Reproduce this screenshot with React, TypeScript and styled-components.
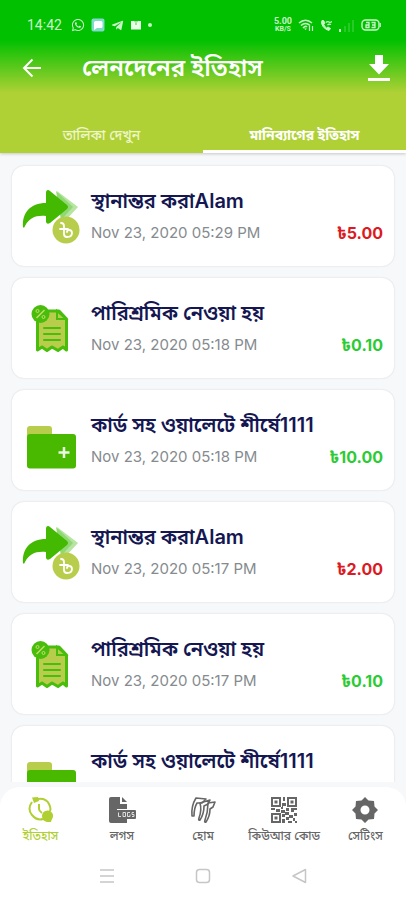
import React from "react";
import styled, { createGlobalStyle } from "styled-components";
import { FaWhatsapp, FaTelegramPlane } from "react-icons/fa";

const Global = createGlobalStyle`
  *, *::before, *::after { box-sizing: border-box; }
  body { margin: 0; background: #f7f8fa; font-family: "Inter", "Noto Sans Bengali", "Noto Sans", sans-serif; }
  button { font: inherit; border: 0; background: none; padding: 0; color: inherit; cursor: pointer; }
  svg { display: block; flex: none; }
`;

const Screen = styled.div`
  display: flex;
  flex-direction: column;
  height: 100vh;
  overflow: hidden;
`;

const Header = styled.header`
  color: #fff;
  background: linear-gradient(#00c000 26%, #b0d136 61%);
  box-shadow: 0 1px 3px rgba(0, 0, 0, 0.2);
`;

const StatusBar = styled.div`
  display: flex;
  align-items: center;
  justify-content: space-between;
  height: 50px;
  padding: 0 25px 0 27px;
  color: #c8f4c8;
`;

const StatusGroup = styled.div<{ $gap: number }>`
  display: flex;
  align-items: center;
  gap: ${(p) => p.$gap}px;
`;

const Clock = styled.time`
  font: 400 14px "Roboto", sans-serif;
  margin-right: 3px;
`;

const NetSpeed = styled.span`
  display: grid;
  justify-items: center;
  font: 700 9px/9px "Roboto", sans-serif;
`;

const NetUnit = styled.span`
  font-size: 7px;
  line-height: 7px;
`;

const TitleBar = styled.div`
  display: flex;
  align-items: center;
  height: 36px;
  padding: 0 15px 0 22px;
`;

const IconButton = styled.button`
  display: flex;
`;

const Title = styled.h1`
  flex: 1;
  margin: 0 0 0 40px;
  font-size: 24px;
  line-height: 36px;
  font-weight: 600;
`;

const Tabs = styled.div`
  display: flex;
  padding-top: 34px;
`;

const Tab = styled.button<{ $active?: boolean }>`
  flex: 1;
  height: 33px;
  && {
    padding-top: 2px;
    font-size: 14px;
    font-weight: ${(p) => (p.$active ? 700 : 500)};
    border-bottom: 3px solid ${(p) => (p.$active ? "#fff" : "transparent")};
    color: ${(p) => (p.$active ? "#fff" : "#eef5c8")};
  }
`;

const List = styled.ul`
  flex: 1;
  min-height: 0;
  margin: 0 0 5px;
  padding: 13px 12px 0;
  list-style: none;
  overflow: hidden;
  display: flex;
  flex-direction: column;
  gap: 12px;
`;

const Card = styled.li`
  flex: none;
  display: flex;
  align-items: center;
  min-height: 100px;
  padding: 2px 11px 0 9px;
  background: #fff;
  border-radius: 12px;
  box-shadow: 0 0 2px rgba(0, 0, 0, 0.16);
`;

const Details = styled.div`
  flex: 1;
  min-width: 0;
  margin-left: 10px;
`;

const Name = styled.h2`
  margin: 0;
  font-size: 20px;
  line-height: 32px;
  font-weight: 600;
  color: #141752;
  white-space: nowrap;
`;

const Meta = styled.div`
  display: flex;
  align-items: center;
  justify-content: space-between;
  min-height: 32px;
  line-height: 32px;
`;

const When = styled.time`
  font-size: 15px;
  color: #858b8f;
`;

const Amount = styled.span<{ $credit: boolean }>`
  font-size: 16px;
  font-weight: 700;
  color: ${(p) => (p.$credit ? "#2ccb35" : "#dd1a1f")};
`;

const Nav = styled.nav`
  display: flex;
  height: 72px;
  padding-top: 9px;
  background: #fff;
  border-radius: 20px 20px 0 0;
`;

const NavItem = styled.button<{ $active?: boolean }>`
  flex: 1 1 0;
  min-width: 0;
  display: flex;
  flex-direction: column;
  align-items: center;
  gap: 3px;
  && { color: ${(p) => (p.$active ? "#b0cf32" : "#666")}; }
`;

const NavLabel = styled.span`
  font-size: 12px;
  line-height: 18px;
  font-weight: 500;
  white-space: nowrap;
`;

const SystemBar = styled.div`
  display: flex;
  justify-content: center;
  gap: 72px;
  height: 41px;
  padding-top: 5px;
  background: #fff;
  color: #c6c6c6;
`;

const SystemButton = styled.button`
  height: 24px;
`;

const ChatIcon = () => (
  <svg width="14" height="14" viewBox="0 0 14 14">
    <rect x="0.500" y="0.500" width="13" height="13" rx="2" fill="#7fdccb" />
    <path d="M3 4.500Q3 3 4.500 3H10Q11.500 3 11.500 4.500V8.500Q11.500 10 10 10H6L3 12z" fill="#fff" />
  </svg>
);

const GiftIcon = () => (
  <svg width="12" height="12" viewBox="0 0 12 12">
    <path d="M1 2H11V10.500H1z" fill="#eaffea" />
    <path d="M4 1.500L6 3.500 8 1.500M6 4V6" fill="none" stroke="#4dcb4d" />
  </svg>
);

const WifiIcon = () => (
  <svg width="16" height="14" viewBox="0 0 16 14" fill="none" stroke="currentColor" strokeWidth="1.600">
    <path d="M1 5Q7.500-.5 14 5M3 7.500Q7.500 3.500 12 7.500M5 10Q7.500 7.500 9 9" />
    <path d="M7.500 12L6 10.500H9z" fill="currentColor" stroke="none" />
    <path d="M11.500 8V13M14.500 8V13" strokeWidth="1.200" />
  </svg>
);

const CallIcon = () => (
  <svg width="12" height="13" viewBox="0 0 12 13" fill="none" stroke="currentColor">
    <path d="M2 1.500Q0.500 4 3 7.500T9 11.500L10.500 9.500 8 8 6.500 9Q4.500 7.500 3.800 5.500L5 4 3.500 1.500z" fill="currentColor" />
    <path d="M6 3.500Q7.500 2 9 3T12 2.500M7.500 6Q9 4.500 11 5.500" strokeWidth="1.300" />
  </svg>
);

const SignalIcon = () => (
  <svg width="17" height="13" viewBox="0 0 17 13" fill="currentColor">
    <rect x="1" y="10" width="2" height="3" />
    <rect x="6" y="7" width="2" height="6" opacity="0.2" />
    <rect x="10" y="4" width="2" height="9" opacity="0.2" />
    <rect x="14" y="1" width="2" height="12" opacity="0.2" />
  </svg>
);

const BatteryIcon = () => (
  <svg width="20" height="12" viewBox="0 0 20 12" fill="none" stroke="currentColor">
    <rect x="1" y="1" width="17" height="10" rx="3.500" strokeWidth="1.400" />
    <path d="M19.300 4V8" strokeWidth="1.200" />
    <path d="M5 3.500H8V8.500H5V6H8M10.500 3.500H14V8.500H10.500M11 6H14" strokeWidth="1.300" />
  </svg>
);

const BackIcon = () => (
  <svg width="20" height="20" viewBox="0 0 20 20" fill="none" stroke="currentColor" strokeWidth="2">
    <path d="M19 10H2.500M10.500 1.500L2 10 10.500 18.500" />
  </svg>
);

const DownloadIcon = () => (
  <svg width="24" height="28" viewBox="0 0 24 28" fill="currentColor">
    <path d="M8 1H16V10H22L12 20.500 2 10H8zM1 24H23V27H1z" />
  </svg>
);

const TransferIcon = () => (
  <svg width="60" height="60" viewBox="0 0 60 60">
    <path d="M36 4L57 20 42 36z" fill="#b5e5a0" />
    <path d="M35 4L52 20 40 33z" fill="#8fd873" />
    <path d="M27 3Q25 3 25 6V16C9 16 1 26 2 40Q3 42 4 39C8 31 15 28 25 29V35Q26 38 29 36L46 22Q48 20 46 18L29 4Q28 3 27 3z" fill="#43b902" />
    <circle cx="45" cy="43" r="13.500" fill="#b9cd4d" />
    <path d="M40 36q3 0 3 3v8q0 3 3 3 5 0 5-4 0-3-3-3-2 0-2 2M39 42h8" fill="none" stroke="#fff" strokeWidth="1.800" strokeLinecap="round" />
  </svg>
);

const ReceiptIcon = () => (
  <svg width="60" height="60" viewBox="0 0 60 60">
    <path d="M16.500 12H38L45.500 20V51L42 48 37 51.500 31 48 26 51.500 21 48 16.500 51z" fill="#b9cd4d" stroke="#49bd0c" strokeWidth="3" strokeLinejoin="round" />
    <path d="M36 12V20H45z" fill="#b9cd4d" stroke="#49bd0c" strokeWidth="2" />
    <path d="M23 29H39M23 35H39M23 41H39" stroke="#49bd0c" strokeWidth="2" strokeLinecap="round" />
    <circle cx="19.500" cy="15" r="9" fill="#49bd0c" />
    <path d="M15.500 19L23.500 11" stroke="#c6dc68" strokeWidth="1.500" />
    <circle cx="16.500" cy="12" r="1.500" fill="none" stroke="#c6dc68" />
    <circle cx="22.500" cy="18" r="1.500" fill="none" stroke="#c6dc68" />
  </svg>
);

const FolderIcon = () => (
  <svg width="60" height="60" viewBox="0 0 60 60">
    <path d="M6 25V18a3 3 0 0 1 3-3H28a3 3 0 0 1 3 3V25z" fill="#b9cd4d" />
    <rect x="6" y="23" width="49" height="34.500" rx="3" fill="#49b900" />
    <path d="M43 36V47M37.500 41.500H48.500" stroke="#e9f8e0" strokeWidth="2.500" />
  </svg>
);

const HistoryIcon = () => (
  <svg width="28" height="28" viewBox="0 0 28 28" fill="none" stroke="currentColor" strokeWidth="2">
    <path d="M5 6Q0 13 5 19T16 23M11 3Q19 2 22 8T22 16" />
    <path d="M12 8V13Q12 15 15 17" />
    <path d="M5 1.500L11 1 12 5 7 7z" fill="currentColor" stroke="none" />
    <circle cx="20.500" cy="20" r="5.500" fill="currentColor" stroke="none" />
    <path d="M14 23L20 26H24L26 18z" fill="currentColor" stroke="none" />
  </svg>
);

const LogsIcon = () => (
  <svg width="28" height="28" viewBox="0 0 28 28">
    <path d="M3 1H12V8H19V13H9V22H19V27H3Q1 27 1 25V3Q1 1 3 1z" fill="currentColor" />
    <path d="M14 1L19 6H14z" fill="currentColor" />
    <rect x="8" y="14" width="20" height="9" rx="1" fill="currentColor" />
    <path d="M10.500 16.500V20.500H13M15 16.500H17.500V20.500H15zM22 16.500H19.500V20.500H22V18.500M26 16.500H24V18.500H26V20.500H24" fill="none" stroke="#ddd" />
  </svg>
);

const HomeIcon = () => (
  <svg width="28" height="28" viewBox="0 0 28 28" fill="none" stroke="currentColor" strokeWidth="1.600" strokeLinejoin="round">
    <path d="M3 20Q2 10 7 2L17 3 13 7H8Q5 12 5 20z" />
    <path d="M11 7L21 4 19 8 15 10Q15 18 11 24Q9 25 10 22Q13 14 11 7z" />
    <path d="M19 7L26 6 24 11 21 13Q21 20 17 26Q15 27 16 24Q19 16 19 7z" />
  </svg>
);

const QrIcon = () => (
  <svg width="28" height="28" viewBox="0 0 28 28">
    <g fill="none" stroke="currentColor" strokeWidth="2">
      <rect x="2" y="2" width="8" height="8" />
      <rect x="18" y="2" width="8" height="8" />
      <rect x="2" y="18" width="8" height="8" />
    </g>
    <path
      fill="currentColor"
      d="M4.500 4.500h3v3h-3zM20.500 4.500h3v3h-3zM4.500 20.500h3v3h-3zM13 1h2v4h-2zM12 7h4v3h-3v3h-2v-2h1zM1 12h4v2H1zM6 13h4v3H6zM11 14h4v3h-4zM16 12h3v3h-3zM21 12h6v2h-3v2h-3zM12 18h3v3h-3zM15 16h4v3h-4zM19 19h4v3h-4zM24 17h3v3h-3zM12 23h3v4h-3zM16 21h3v3h-3zM18 25h4v2h-4zM23 22h2v3h-2zM25 25h2v2h-2z"
    />
  </svg>
);

const GearIcon = () => (
  <svg width="28" height="28" viewBox="0 0 28 28">
    <path
      fill="currentColor"
      fillRule="evenodd"
      d="M14 1L17.500 4.500 23 5 23.500 10.500 27 14 23.500 17.500 23 23 17.500 23.500 14 27 10.500 23.500 5 23 4.500 17.500 1 14 4.500 10.500 5 5 10.500 4.500zM14 9.500a4.500 4.500 0 1 0 0 9 4.500 4.500 0 1 0 0-9z"
    />
  </svg>
);

const icons = { transfer: TransferIcon, receipt: ReceiptIcon, folder: FolderIcon };

type Entry = { kind: keyof typeof icons; name: string; when?: string; amount?: string; credit: boolean };

const entries: Entry[] = [
  { kind: "transfer", name: "স্থানান্তর করাAlam", when: "Nov 23, 2020 05:29 PM", amount: "৳5.00", credit: false },
  { kind: "receipt", name: "পারিশ্রমিক নেওয়া হয়", when: "Nov 23, 2020 05:18 PM", amount: "৳0.10", credit: true },
  { kind: "folder", name: "কার্ড সহ ওয়ালেটে শীর্ষে1111", when: "Nov 23, 2020 05:18 PM", amount: "৳10.00", credit: true },
  { kind: "transfer", name: "স্থানান্তর করাAlam", when: "Nov 23, 2020 05:17 PM", amount: "৳2.00", credit: false },
  { kind: "receipt", name: "পারিশ্রমিক নেওয়া হয়", when: "Nov 23, 2020 05:17 PM", amount: "৳0.10", credit: true },
  { kind: "folder", name: "কার্ড সহ ওয়ালেটে শীর্ষে1111", credit: true },
];

const navItems = [
  { label: "ইতিহাস", Icon: HistoryIcon },
  { label: "লগস", Icon: LogsIcon },
  { label: "হোম", Icon: HomeIcon },
  { label: "কিউআর কোড", Icon: QrIcon },
  { label: "সেটিংস", Icon: GearIcon },
];

export default function App() {
  return (
    <Screen>
      <Global />
      <Header>
        <StatusBar>
          <StatusGroup $gap={6}>
            <Clock>14:42</Clock>
            <FaWhatsapp size={14} />
            <ChatIcon />
            <FaTelegramPlane size={13} />
            <GiftIcon />
            <svg width="4" height="4" viewBox="0 0 4 4"><circle cx="2" cy="2" r="2" fill="currentColor" /></svg>
          </StatusGroup>
          <StatusGroup $gap={6}>
            <NetSpeed>
              <span>5.00</span>
              <NetUnit>KB/S</NetUnit>
            </NetSpeed>
            <WifiIcon />
            <CallIcon />
            <SignalIcon />
            <BatteryIcon />
          </StatusGroup>
        </StatusBar>
        <TitleBar>
          <IconButton aria-label="Back"><BackIcon /></IconButton>
          <Title>লেনদেনের ইতিহাস</Title>
          <IconButton aria-label="Download"><DownloadIcon /></IconButton>
        </TitleBar>
        <Tabs role="tablist">
          <Tab role="tab">তালিকা দেখুন</Tab>
          <Tab role="tab" aria-selected $active>মানিব্যাগের ইতিহাস</Tab>
        </Tabs>
      </Header>
      <List>
        {entries.map((entry, index) => {
          const Icon = icons[entry.kind];
          return (
            <Card key={index}>
              <Icon />
              <Details>
                <Name>{entry.name}</Name>
                <Meta>
                  {entry.when && <When>{entry.when}</When>}
                  {entry.amount && <Amount $credit={entry.credit}>{entry.amount}</Amount>}
                </Meta>
              </Details>
            </Card>
          );
        })}
      </List>
      <Nav>
        {navItems.map(({ label, Icon }, index) => (
          <NavItem key={label} $active={index === 0}>
            <Icon />
            <NavLabel>{label}</NavLabel>
          </NavItem>
        ))}
      </Nav>
      <SystemBar>
        <SystemButton aria-label="Recent apps">
          <svg width="24" height="24" viewBox="0 0 24 24" stroke="currentColor" strokeWidth="1.500"><path d="M5 6H19M5 12H19M5 18H19" /></svg>
        </SystemButton>
        <SystemButton aria-label="Home screen">
          <svg width="24" height="24" viewBox="0 0 24 24" fill="none" stroke="currentColor" strokeWidth="1.500"><rect x="5.500" y="5.500" width="13" height="13" rx="3" /></svg>
        </SystemButton>
        <SystemButton aria-label="Go back">
          <svg width="24" height="24" viewBox="0 0 24 24" fill="none" stroke="currentColor" strokeWidth="1.500" strokeLinejoin="round"><path d="M18.500 5.500V18.500L6 12z" /></svg>
        </SystemButton>
      </SystemBar>
    </Screen>
  );
}
